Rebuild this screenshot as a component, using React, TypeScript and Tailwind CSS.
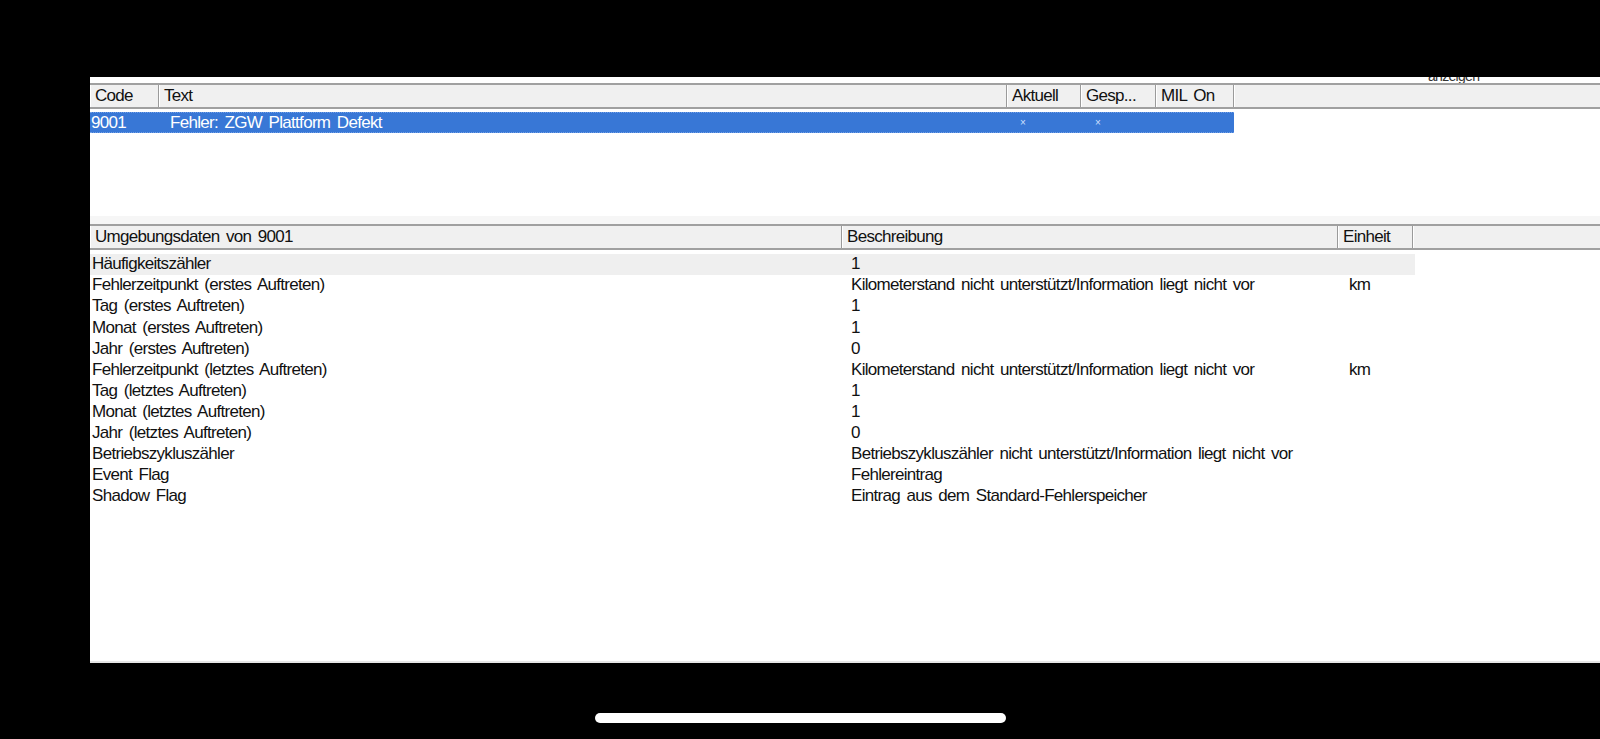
import React from 'react';

type Row = { name: string; desc: string; unit?: string };

const ROWS: Row[] = [
  { name: 'Häufigkeitszähler', desc: '1' },
  { name: 'Fehlerzeitpunkt (erstes Auftreten)', desc: 'Kilometerstand nicht unterstützt/Information liegt nicht vor', unit: 'km' },
  { name: 'Tag (erstes Auftreten)', desc: '1' },
  { name: 'Monat (erstes Auftreten)', desc: '1' },
  { name: 'Jahr (erstes Auftreten)', desc: '0' },
  { name: 'Fehlerzeitpunkt (letztes Auftreten)', desc: 'Kilometerstand nicht unterstützt/Information liegt nicht vor', unit: 'km' },
  { name: 'Tag (letztes Auftreten)', desc: '1' },
  { name: 'Monat (letztes Auftreten)', desc: '1' },
  { name: 'Jahr (letztes Auftreten)', desc: '0' },
  { name: 'Betriebszykluszähler', desc: 'Betriebszykluszähler nicht unterstützt/Information liegt nicht vor' },
  { name: 'Event Flag', desc: 'Fehlereintrag' },
  { name: 'Shadow Flag', desc: 'Eintrag aus dem Standard-Fehlerspeicher' },
];

// header cell of the old windows list view
const Head: React.FC<{ w: string; label?: string }> = ({ w, label }) => (
  <div className={`${w} h-full shrink-0 flex items-center pl-[5px] border-r border-[#9a9a9a] shadow-[inset_1px_0_0_#ffffff] whitespace-nowrap overflow-hidden`}>
    {label}
  </div>
);

const App: React.FC = () => {
  return (
    <div
      className="w-[1600px] h-[739px] bg-black flex flex-col overflow-hidden text-[17px] tracking-[-0.7px] [word-spacing:2.5px] text-[#111]"
      style={{ fontFamily: '"Liberation Sans", Arial, sans-serif' }}
    >
      <div className="h-[77px] shrink-0" />

      <div className="flex h-[586px] shrink-0">
        <div className="w-[90px] shrink-0" />
        <div className="flex-1 bg-white flex flex-col">
          {/* clipped toolbar text from above */}
          <div className="h-[6px] overflow-hidden relative">
            <span className="absolute left-[1338px] -top-[11px] text-[14px] text-[#333]">anzeigen</span>
          </div>

          {/* fault list */}
          <div className="h-[26px] flex bg-[#f0f0f0] border-t-2 border-b-2 border-[#a0a0a0]">
            <Head w="w-[69px]" label="Code" />
            <Head w="w-[848px]" label="Text" />
            <Head w="w-[74px]" label="Aktuell" />
            <Head w="w-[75px]" label="Gesp..." />
            <Head w="w-[78px]" label="MIL On" />
            <div className="flex-1 shadow-[inset_1px_0_0_#ffffff]" />
          </div>
          <div className="mt-[3px] h-[21px] w-[1144px] flex items-center bg-[#3877d6] text-white border-y border-dotted border-[#6f9ee6]">
            <span className="w-[80px] pl-[1px]">9001</span>
            <span className="w-[850px]">Fehler: ZGW Plattform Defekt</span>
            <span className="w-[75px] text-[10px] text-[#cfe0ff]">×</span>
            <span className="text-[10px] text-[#cfe0ff]">×</span>
          </div>

          <div className="h-[83px]" />
          <div className="h-[8px] bg-[#f6f6f6]" />

          {/* environment data */}
          <div className="h-[26px] flex bg-[#f0f0f0] border-t-2 border-b-2 border-[#a0a0a0]">
            <Head w="w-[752px]" label="Umgebungsdaten von 9001" />
            <Head w="w-[496px]" label="Beschreibung" />
            <Head w="w-[75px]" label="Einheit" />
            <div className="flex-1 shadow-[inset_1px_0_0_#ffffff]" />
          </div>
          <div className="mt-[3.5px] flex flex-col">
            {ROWS.map((r, i) => (
              <div key={r.name} className={`h-[21.1px] w-[1325px] flex items-center ${i === 0 ? 'bg-[#efefef]' : ''}`}>
                <span className="w-[761px] pl-[2px] whitespace-nowrap">{r.name}</span>
                <span className="w-[498px] whitespace-nowrap">{r.desc}</span>
                <span>{r.unit}</span>
              </div>
            ))}
          </div>
          <div className="flex-1" />
          <div className="h-[2px] bg-[#e6e6e6]" />
        </div>
      </div>

      <div className="flex-1 flex justify-center">
        <div className="mt-[50px] w-[411px] h-[10px] rounded-full bg-white" />
      </div>
    </div>
  );
};

export default App;
